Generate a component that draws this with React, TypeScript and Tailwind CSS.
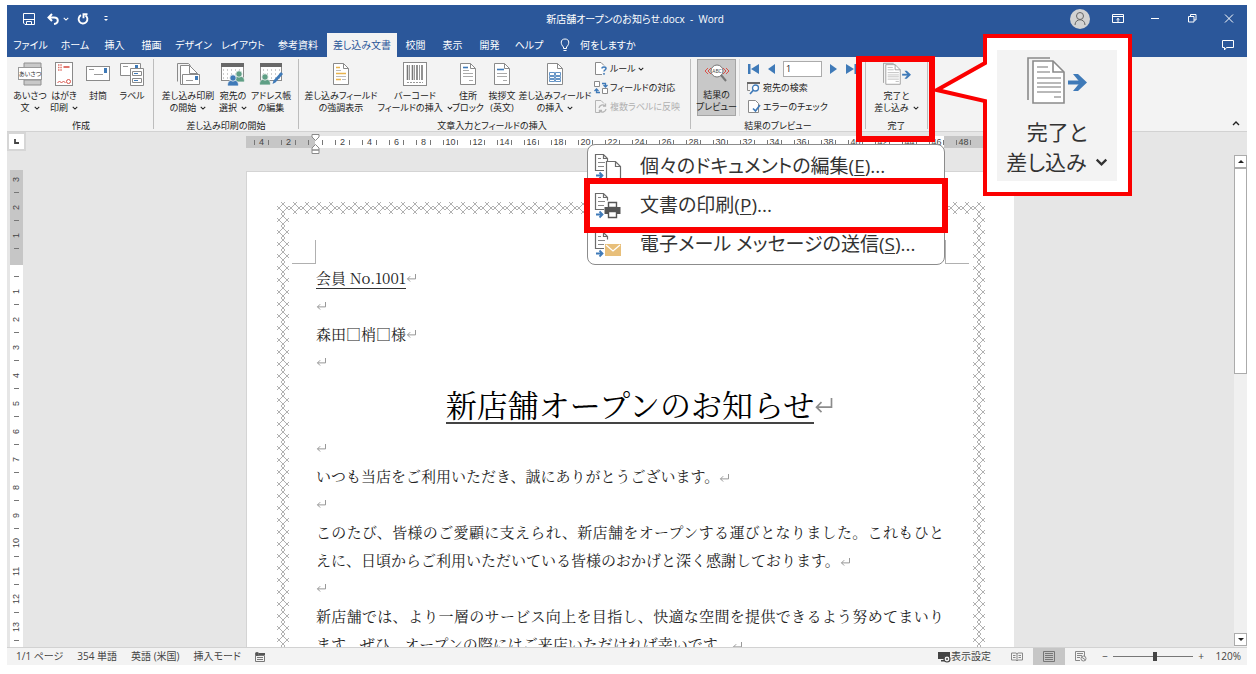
import { ReactNode } from "react";
import clsx from "clsx";

const BLUE = "#3f7ab8";

/* ---------- small shared drawings ---------- */

const Chevron = ({ className = "w-[6px] h-[4px]" }: { className?: string }) => (
  <svg viewBox="0 0 8 5" className={clsx("inline-block shrink-0", className)} fill="none" stroke="currentColor" strokeWidth="1.4">
    <path d="M1 1l3 3 3-3" />
  </svg>
);

const ReturnMark = ({ className = "w-[11px] h-[8px]" }: { className?: string }) => (
  <svg viewBox="0 0 12 9" className={clsx("shrink-0 text-[#8c8c8c]", className)} fill="none" stroke="currentColor">
    <path d="M10.500 0v5.500H1.500M4.500 2.500l-3 3 3 3" />
  </svg>
);

const Sheet = ({ children }: { children?: ReactNode }) => (
  <svg viewBox="0 0 24 24" className="h-6 w-6" fill="none">
    <path d="M4.500 1.500h10l5 5v16h-15z" fill="#fff" stroke="#8a8a8a" />
    <path d="M14.500 1.500v5h5" stroke="#8a8a8a" />
    {children}
  </svg>
);

const GreetingIcon = () => (
  <svg viewBox="0 0 24 24" className="h-6 w-6">
    <path d="M6 1h17v5H6zM6 18h17v5H6z" fill="#c9c9c9" stroke="#909090" />
    <rect x="0.500" y="5.500" width="23" height="12" fill="#fff" stroke="#9a9a9a" />
    <text x="12" y="14" textAnchor="middle" fontSize="6" fill="#333">
      あいさつ
    </text>
  </svg>
);

const PostcardIcon = () => (
  <svg viewBox="0 0 24 24" className="h-6 w-6" fill="none">
    <rect x="3.500" y="0.500" width="17" height="23" fill="#fff" stroke="#8a8a8a" />
    <path d="M6 3h4M6 5.500h4M6 8h4" stroke="#e0766c" strokeWidth="1.500" strokeDasharray="1.500 0.800" />
    <path d="M11.500 5h6" stroke="#d9534a" strokeWidth="1.600" />
    <path d="M5.500 20.500l2-1 2 1 2-1 2 1" stroke="#d9534a" />
    <circle cx="16.500" cy="19.500" r="2" stroke="#d9534a" />
  </svg>
);

const EnvelopeIcon = () => (
  <svg viewBox="0 0 24 24" className="h-6 w-6" fill="none">
    <rect x="0.500" y="4.500" width="23" height="14" fill="#fff" stroke="#8a8a8a" />
    <path d="M3 7.500h5M8 12.500h9" stroke="#999" />
    <path d="M18 6h3v5h-3z" fill={BLUE} />
  </svg>
);

const LabelIcon = () => (
  <svg viewBox="0 0 24 24" className="h-6 w-6" fill="none">
    <path d="M0.500 1.500h20v12h-20z" fill="#fff" stroke="#8a8a8a" />
    <path d="M3 4.500h5" stroke="#999" />
    <path d="M15 3h3v3h-3z" fill={BLUE} />
    <path d="M10.500 6.500h13v17h-13z" fill="#fff" stroke="#8a8a8a" />
    <path d="M12.500 9.500h9v4h-9zM12.500 16.500h9v4h-9z" stroke="#8a8a8a" />
    <path d="M14 11.500h4M14 18.500h4" stroke={BLUE} />
  </svg>
);

const StartMergeIcon = () => (
  <svg viewBox="0 0 24 24" className="h-6 w-6" fill="none">
    <path d="M1.500 19.500v-18h11l2 2" stroke="#8a8a8a" />
    <path d="M4.500 3.500h9l8 8v11h-17z" fill="#fff" stroke="#8a8a8a" />
    <path d="M13.500 3.500v8h8" stroke="#8a8a8a" />
    <path d="M6.500 12.500h17v10h-17z" fill="#fff" stroke="#8a8a8a" />
    <path d="M10 18.500h7" stroke="#999" />
    <path d="M19 14h3v4h-3z" fill={BLUE} />
  </svg>
);

const Person = ({ x, y, fill }: { x: number; y: number; fill: string }) => (
  <g transform={`translate(${x} ${y})`} fill={fill} stroke="#f3f3f3" strokeWidth="0.8">
    <path d="M-5.500 11c0-4 1.500-5.500 3.500-5.500h4c2 0 3.500 1.500 3.500 5.500z" />
    <circle cx="0" cy="3" r="3.200" />
  </g>
);

const RecipientsIcon = () => (
  <svg viewBox="0 0 24 24" className="h-6 w-6" fill="none">
    <rect x="0.500" y="1.500" width="22" height="17" fill="#fff" stroke="#8a8a8a" />
    <path d="M0 1h23v4H0z" fill="#686868" />
    <path d="M2 8h19M2 12h19M2 16h19" stroke="#999" strokeDasharray="1 3" />
    <Person x={18} y={9} fill="#5f9f85" />
    <Person x={12} y={13} fill={BLUE} />
  </svg>
);

const EditListIcon = () => (
  <svg viewBox="0 0 24 24" className="h-6 w-6" fill="none">
    <rect x="1.500" y="1.500" width="21" height="17" fill="#fff" stroke="#8a8a8a" />
    <path d="M1 1h22v4H1z" fill="#686868" />
    <path d="M4 8h17M4 12h17M4 16h17" stroke="#999" strokeDasharray="1 3" />
    <Person x={6} y={12} fill="#5f9f85" />
    <path d="M13.500 22l1-3.500 7.500-8.500 2 2-7.500 8.500z" fill={BLUE} />
  </svg>
);

const HighlightIcon = () => (
  <Sheet>
    <path d="M7 5.500h4M7 11.500h10M7 17.500h5" stroke="#e9b44c" strokeWidth="1.600" />
    <path d="M7 8.500h5M7 14.500h10M13 17.500h4" stroke="#bbb" />
  </Sheet>
);

const BarcodeIcon = () => (
  <svg viewBox="0 0 24 24" className="h-6 w-6" fill="none">
    <rect x="0.500" y="0.500" width="23" height="23" fill="#fff" stroke="#8a8a8a" />
    <path d="M4.500 3v15M9.500 3v15M14 3v15M19 3v15" stroke="#777" strokeWidth="1.600" />
    <path d="M6.500 3v15M11.500 3v15M16.500 3v15" stroke="#999" strokeWidth="1" />
    <path d="M4 20.500h16" stroke="#999" strokeDasharray="2 1" />
  </svg>
);

const AddressBlockIcon = () => (
  <Sheet>
    <path d="M7 5.500h5" stroke={BLUE} strokeWidth="1.600" />
    <path d="M7 8.500h6M7 11.500h10M7 14.500h10M13 18.500h4" stroke="#aaa" />
  </Sheet>
);

const GreetingLineIcon = () => (
  <Sheet>
    <path d="M7 7.500h7" stroke={BLUE} strokeWidth="1.600" />
    <path d="M7 11.500h10M7 14.500h10M13 18.500h4" stroke="#aaa" />
  </Sheet>
);

const InsertFieldIcon = () => (
  <Sheet>
    <path d="M6.500 10.500h5v3h-5zM12.500 10.500h5v3h-5zM6.500 14.500h5v2h-5zM12.500 14.500h5v2h-5zM6.500 17.500h5v2h-5zM12.500 17.500h5v2h-5z" stroke={BLUE} strokeWidth="0.800" />
  </Sheet>
);

const FinishIcon = ({ className }: { className: string }) => (
  <svg viewBox="0 0 60 48" className={className} fill="none">
    <path d="M1 43V1h22" stroke="#8a8a8a" strokeWidth="1.600" />
    <path d="M6 4h20l11 11v31H6z" fill="#fff" stroke="#8a8a8a" strokeWidth="1.600" />
    <path d="M26 4v11h11" stroke="#8a8a8a" strokeWidth="1.600" />
    <path d="M10 10h11M10 15h13M10 21h24M10 26h24M10 30h24M10 35h24M27 40h7" stroke="#a3a3a3" strokeWidth="1.400" />
    <path d="M41 25.500h14" stroke={BLUE} strokeWidth="4" />
    <path d="M46 17h5l9 8.500-9 8.500h-5l7-8.500z" fill={BLUE} />
  </svg>
);

const PreviewIcon = () => (
  <svg viewBox="0 0 26 20" className="h-6 w-[26px]" fill="none">
    <path d="M4 5L1 8l3 3M7 5L4 8l3 3M22 5l3 3-3 3M19 5l3 3-3 3" stroke="#d9534a" />
    <circle cx="13" cy="8" r="6" fill="#fff" stroke="#777" />
    <path d="M17 12l5 6" stroke="#777" strokeWidth="2" />
    <text x="13" y="10" textAnchor="middle" fontSize="5" fill="#444">
      ABC
    </text>
  </svg>
);

const smallIcon = "h-[14px] w-[14px] shrink-0";

const RuleIcon = () => (
  <svg viewBox="0 0 14 14" className={smallIcon} fill="none">
    <path d="M8 12.500H1.500v-12H7l3 3" fill="#fff" stroke="#8a8a8a" />
    <path d="M8 6.500c0-2 4-2 4 0 0 1.500-2 1.500-2 3M10 11v1.800" stroke={BLUE} strokeWidth="1.500" />
  </svg>
);

const MatchIcon = () => (
  <svg viewBox="0 0 14 14" className={smallIcon} fill="none">
    <path d="M0.500 0.500h5v5h-5zM8.500 7.500h5v5h-5z" fill="#fff" stroke="#8a8a8a" />
    <path d="M8 2.500h3.500v3M9.500 4l2 2 2-2M6 11.500H2.500v-3M0.500 10l2-2 2 2" stroke={BLUE} strokeWidth="1.300" />
  </svg>
);

const UpdateLabelsIcon = () => (
  <svg viewBox="0 0 14 14" className={smallIcon} fill="none" stroke="#b5b5b5">
    <path d="M5 12.500H1.500v-12H7l3 3" />
    <path d="M5 8a3.500 3.500 0 016-2M12 9a3.500 3.500 0 01-6 2M11.500 3.500V6H9M5.500 13v-2.500H8" strokeWidth="1.300" />
  </svg>
);

const FindIcon = () => (
  <svg viewBox="0 0 14 14" className={smallIcon} fill="none">
    <path d="M3 9.500H.5v-7h12" stroke="#8a8a8a" />
    <path d="M0 1h13v2H0z" fill="#686868" />
    <circle cx="8.500" cy="7" r="3" fill="#fff" stroke={BLUE} strokeWidth="1.300" />
    <path d="M6.500 9L3 13" stroke={BLUE} strokeWidth="1.600" />
  </svg>
);

const CheckIcon = () => (
  <svg viewBox="0 0 14 14" className={smallIcon} fill="none">
    <path d="M1.500 .5h7l3 3v9h-10z" fill="#fff" stroke="#8a8a8a" />
    <path d="M6 8.500l2.500 2.500L13 5" stroke={BLUE} strokeWidth="1.700" />
  </svg>
);

/* ---------- title bar ---------- */

const TitleBar = () => (
  <header className="flex h-7 shrink-0 items-center justify-between bg-[#2b579a] text-white">
    <div className="flex flex-1 items-center pl-4">
      <button aria-label="上書き保存">
        <svg viewBox="0 0 12 12" className="h-3 w-3" fill="none" stroke="currentColor">
          <path d="M.5.5h11v11H2l-1.500-1.500zM.5 6.500h11M3.500 11.500v-3h5v3" />
        </svg>
      </button>
      <button aria-label="元に戻す" className="ml-3 flex items-center gap-1">
        <svg viewBox="0 0 12 12" className="h-3 w-3" fill="none" stroke="currentColor" strokeWidth="2">
          <path d="M5 1L1.500 4.500 5 8M2 4.500h5c5 0 5 6 0 6.500" />
        </svg>
        <Chevron />
      </button>
      <button aria-label="やり直し" className="ml-2">
        <svg viewBox="0 0 12 12" className="h-3 w-3" fill="none" stroke="currentColor" strokeWidth="1.900">
          <path d="M4 2.200A4.400 4.400 0 108.500 2.500M10.500 1.200H6.500v4" />
        </svg>
      </button>
      <button aria-label="クイック アクセス ツール バーのカスタマイズ" className="ml-[14px]">
        <svg viewBox="0 0 6 6" className="h-[6px] w-[6px]" fill="currentColor">
          <path d="M1.500 0h3v1h-3zM1 3h4L3 5z" />
        </svg>
      </button>
    </div>
    <h1 className="whitespace-pre text-[10px]">新店舗オープンのお知らせ.docx  -  Word</h1>
    <div className="flex flex-1 items-center justify-end">
      <button aria-label="アカウント" className="mr-[9px]">
        <svg viewBox="0 0 20 20" className="h-5 w-5" fill="none">
          <circle cx="10" cy="10" r="10" fill="#d2d2d2" />
          <circle cx="10" cy="7" r="3.500" stroke="#666" />
          <path d="M5 16c0-7 10-7 10 0" stroke="#666" />
        </svg>
      </button>
      {[
        { name: "リボンの表示オプション", d: "M.5 1.500h11v8H.5zM.5 3.500h11M6 9V5.500M4.500 6.800L6 5.400l1.500 1.400" },
        { name: "最小化", d: "M2 5.500h8" },
        { name: "元に戻す (縮小)", d: "M2.500 3.500h5.500v5.500H2.500zM4.500 3.500V1.500h5.500v5.500H8" },
        { name: "閉じる", d: "M2 1.500l8 8M10 1.500l-8 8" },
      ].map((item) => (
        <button key={item.name} aria-label={item.name} className="flex w-[37px] justify-center">
          <svg viewBox="0 0 12 12" className="h-3 w-3" fill="none" stroke="currentColor">
            <path d={item.d} />
          </svg>
        </button>
      ))}
    </div>
  </header>
);

const tabs = [
  { label: "ファイル", width: "w-[47px]" },
  { label: "ホーム", width: "w-[42px]" },
  { label: "挿入", width: "w-[37px]" },
  { label: "描画", width: "w-[37px]" },
  { label: "デザイン", width: "w-[47px]" },
  { label: "レイアウト", width: "w-[52px]" },
  { label: "参考資料", width: "w-[58px]" },
  { label: "差し込み文書", width: "w-[70px]", active: true },
  { label: "校閲", width: "w-[37px]" },
  { label: "表示", width: "w-[37px]" },
  { label: "開発", width: "w-[37px]" },
  { label: "ヘルプ", width: "w-[42px]" },
];

const TabBar = () => (
  <nav className="flex h-6 shrink-0 items-stretch whitespace-nowrap bg-[#2b579a] text-[10px] text-white">
    {tabs.map((tab) => (
      <button key={tab.label} className={clsx("shrink-0", tab.width, tab.active && "bg-[#f3f3f3] text-[#2b579a]")}>
        {tab.label}
      </button>
    ))}
    <button className="ml-[10px] flex items-center gap-[10px]">
      <svg viewBox="0 0 10 14" className="h-[14px] w-[10px]" fill="none" stroke="currentColor">
        <path d="M3.500 10.500V9C.5 6.500 0 1 5 1s4.500 5.500 1.500 8v1.500zM3.500 12.500h3" />
      </svg>
      何をしますか
    </button>
    <button aria-label="コメント" className="ml-auto mr-3">
      <svg viewBox="0 0 14 12" className="h-3 w-[14px]" fill="none" stroke="currentColor">
        <path d="M1.500 1.500h11v7H5.500L3.500 11V8.500h-2z" />
      </svg>
    </button>
  </nav>
);

/* ---------- ribbon ---------- */

interface BigButtonProps {
  icon: ReactNode;
  lines: string[];
  width: string;
  menu?: boolean;
  pressed?: boolean;
}

const BigButton = ({ icon, lines, width, menu, pressed }: BigButtonProps) => (
  <button
    className={clsx(
      "flex h-[57px] shrink-0 flex-col items-center gap-1 whitespace-nowrap leading-[12px]",
      width,
      pressed ? "border border-[#a5a5a5] bg-[#c8c8c8] pt-px" : "pt-[3px]"
    )}
  >
    {icon}
    <span className="flex flex-col items-center">
      {lines.map((line, i) => (
        <span key={line} className="flex items-center gap-1">
          {line}
          {menu && i === lines.length - 1 && <Chevron />}
        </span>
      ))}
    </span>
  </button>
);

const Group = ({ label, className, children }: { label: string; className?: string; children: ReactNode }) => (
  <section className="flex shrink-0 items-start">
    <div className={clsx("flex h-[73px] flex-col justify-between", className)}>
      <div className="flex">{children}</div>
      <div className="text-center leading-[12px]">{label}</div>
    </div>
    <div className="h-[70px] w-px bg-[#bdbdbd]" />
  </section>
);

const SmallButton = ({ icon, label, menu, disabled }: { icon: ReactNode; label: string; menu?: boolean; disabled?: boolean }) => (
  <button disabled={disabled} className={clsx("flex h-[19px] items-center gap-[2px] whitespace-nowrap", disabled && "text-[#b0b0b0]")}>
    {icon}
    {label}
    {menu && <Chevron />}
  </button>
);

const navButtons = {
  first: { name: "先頭のレコード", d: "M1 1h2.500v10H1zM12 1v10L4 6z" },
  prev: { name: "前のレコード", d: "M10 1v10L3 6z" },
  next: { name: "次のレコード", d: "M2 1v10l7-5z" },
  last: { name: "最後のレコード", d: "M8.500 1H11v10H8.500zM0 1v10l8-5z" },
};

const NavButton = ({ kind }: { kind: keyof typeof navButtons }) => (
  <button aria-label={navButtons[kind].name}>
    <svg viewBox="0 0 12 12" className="h-3 w-3" fill={BLUE}>
      <path d={navButtons[kind].d} />
    </svg>
  </button>
);

const Ribbon = () => (
  <div className="flex h-[75px] shrink-0 border-b border-[#d2d2d2] bg-[#f3f3f3] pt-[2px] text-[9px] text-[#222]">
    <Group label="作成" className="pl-[6px] pr-1">
      <BigButton icon={<GreetingIcon />} lines={["あいさつ", "文"]} width="w-[34px]" menu />
      <BigButton icon={<PostcardIcon />} lines={["はがき", "印刷"]} width="w-[34px]" menu />
      <BigButton icon={<EnvelopeIcon />} lines={["封筒"]} width="w-[34px]" />
      <BigButton icon={<LabelIcon />} lines={["ラベル"]} width="w-[34px]" />
    </Group>
    <Group label="差し込み印刷の開始" className="pl-[6px] pr-[6px]">
      <BigButton icon={<StartMergeIcon />} lines={["差し込み印刷", "の開始"]} width="w-[56px]" menu />
      <BigButton icon={<RecipientsIcon />} lines={["宛先の", "選択"]} width="w-[34px]" menu />
      <BigButton icon={<EditListIcon />} lines={["アドレス帳", "の編集"]} width="w-[42px]" />
    </Group>
    <Group label="文章入力とフィールドの挿入" className="pl-1 pr-[9px]">
      <BigButton icon={<HighlightIcon />} lines={["差し込みフィールド", "の強調表示"]} width="w-[76px]" />
      <BigButton icon={<BarcodeIcon />} lines={["バーコード", "フィールドの挿入"]} width="w-[72px]" menu />
      <BigButton icon={<AddressBlockIcon />} lines={["住所", "ブロック"]} width="w-[34px]" />
      <BigButton icon={<GreetingLineIcon />} lines={["挨拶文", "(英文)"]} width="w-[34px]" />
      <BigButton icon={<InsertFieldIcon />} lines={["差し込みフィールド", "の挿入"]} width="w-[72px]" menu />
      <div className="flex w-[90px] flex-col pl-[3px]">
        <SmallButton icon={<RuleIcon />} label="ルール" menu />
        <SmallButton icon={<MatchIcon />} label="フィールドの対応" />
        <SmallButton icon={<UpdateLabelsIcon />} label="複数ラベルに反映" disabled />
      </div>
    </Group>
    <Group label="結果のプレビュー" className="pl-[6px] pr-[6px]">
      <BigButton icon={<PreviewIcon />} lines={["結果の", "プレビュー"]} width="w-[39px]" pressed />
      <div className="ml-[3px] flex w-[120px] flex-col border-l border-[#dcdcdc] pl-[7px]">
        <div className="flex h-[19px] items-center gap-[6px]">
          <NavButton kind="first" />
          <NavButton kind="prev" />
          <input aria-label="レコード" defaultValue="1" className="h-4 w-[39px] border border-[#ababab] bg-white px-[2px]" />
          <NavButton kind="next" />
          <NavButton kind="last" />
        </div>
        <SmallButton icon={<FindIcon />} label="宛先の検索" />
        <SmallButton icon={<CheckIcon />} label="エラーのチェック" />
      </div>
    </Group>
    <Group label="完了">
      <BigButton icon={<FinishIcon className="h-6 w-[28px]" />} lines={["完了と", "差し込み"]} width="w-[61px]" menu />
    </Group>
    <button aria-label="リボンを折りたたむ" className="mb-[2px] ml-auto mr-[7px] self-end">
      <Chevron className="h-[5px] w-2 rotate-180" />
    </button>
  </div>
);

/* ---------- rulers ---------- */

const rulerMarks = Array.from({ length: 27 }, (_, i) => i * 2 - 4);

const Tick = () => <span className="h-[5px] w-px bg-[#777]" />;

const HorizontalRuler = () => (
  <div className="relative flex h-3 w-[768px] bg-[linear-gradient(to_right,#c6c6c6_69px,#fff_69px,#fff_698px,#c6c6c6_698px)] pl-[2px] font-['Liberation_Sans',sans-serif] text-[9px] leading-[12px] text-[#444]">
    {rulerMarks.map((mark) => (
      <div key={mark} className="flex w-[27px] shrink-0 items-center justify-center">
        <Tick />
        <span className="flex w-[13px] justify-center">{mark === 0 ? "" : Math.abs(mark)}</span>
        <Tick />
      </div>
    ))}
    <svg viewBox="0 0 9 20" className="absolute -top-[2px] left-[65px] h-5 w-[9px]" fill="#fff" stroke="#8a8a8a">
      <path d="M1 .5h7v2.500L4.500 6.500 1 3zM4.500 10.500L8 14v2H1v-2zM1 16h7v3.500H1z" />
    </svg>
  </div>
);

const verticalMarks = [3, 2, 1, 0, 1, 2, 3, 4, 5, 6, 7, 8, 9, 10, 11, 12, 13];

const VerticalRuler = () => (
  <div className="ml-[3px] mt-[38px] w-[13px] shrink-0 overflow-hidden bg-[linear-gradient(to_bottom,#c6c6c6_95px,#fff_95px)] pt-[2px] font-['Liberation_Sans',sans-serif] text-[9px] leading-[13px] text-[#444]">
    {verticalMarks.map((mark, i) => (
      <div key={i} className="flex h-[28px] flex-col items-center">
        <span className="flex h-[14px] rotate-180 items-center justify-center [writing-mode:vertical-rl]">{mark || ""}</span>
        <span className="my-[6px] h-px w-[5px] bg-[#777]" />
      </div>
    ))}
  </div>
);

/* ---------- document ---------- */

// one stitch of the page border: a diamond whose sides run past the corners
const BorderStrip = ({ id, className }: { id: string; className: string }) => (
  <svg className={clsx("shrink-0", className)}>
    <defs>
      <pattern id={id} width="12" height="12" patternUnits="userSpaceOnUse">
        <path d="M0 8L8 0M4 0l8 8M12 4l-8 8M8 12L0 4" fill="none" stroke="#8f8f8f" strokeWidth="0.700" />
      </pattern>
    </defs>
    <rect width="100%" height="100%" fill={`url(#${id})`} />
  </svg>
);

const Line = ({ children }: { children?: ReactNode }) => (
  <p className="flex h-[28px] items-center">
    {children}
    <ReturnMark />
  </p>
);

const Paragraph = ({ children }: { children: ReactNode }) => (
  <p className="text-justify leading-[28px]">
    {children}
    <ReturnMark className="inline-block h-[8px] w-[11px]" />
  </p>
);

const Page = () => (
  <article className="mt-[23px] min-h-0 w-[768px] flex-1 overflow-hidden border-l border-t border-[#d4d4d4] bg-white pl-[30px] pt-[30px] [font-feature-settings:normal]">
    <div className="w-[708px]">
      <BorderStrip id="stitch-top" className="block h-3 w-full" />
      <div className="flex">
        <BorderStrip id="stitch-left" className="h-[480px] w-3" />
        <div className="flex-1">
          <div className="flex justify-between pl-[3px] pr-1 pt-[26px]">
            <div className="h-6 w-6 border-b border-r border-[#b0b0b0]" />
            <div className="h-6 w-6 border-b border-l border-[#b0b0b0]" />
          </div>
          <div className="ml-[27px] w-[628px] font-['Noto_Serif_CJK_JP','Noto_Sans_CJK_JP',serif] text-[15px] text-[#222]">
            <Line>
              <span className="border-b border-[#333] leading-[20px]">会員 No.1001</span>
            </Line>
            <Line />
            <Line>森田□梢□様</Line>
            <Line />
            <h2 className="flex h-[58px] items-center justify-center text-[31px] text-black">
              <span className="border-b-2 border-[#444] leading-[36px]">新店舗オープンのお知らせ</span>
              <span className="w-0">
                <ReturnMark className="h-[15px] w-5" />
              </span>
            </h2>
            <Line />
            <Paragraph>いつも当店をご利用いただき、誠にありがとうございます。</Paragraph>
            <Line />
            <Paragraph>
              このたび、皆様のご愛顧に支えられ、新店舗をオープンする運びとなりました。これもひとえに、日頃からご利用いただいている皆様のおかげと深く感謝しております。
            </Paragraph>
            <Line />
            <Paragraph>
              新店舗では、より一層のサービス向上を目指し、快適な空間を提供できるよう努めてまいります。ぜひ、オープンの際にはご来店いただければ幸いです。
            </Paragraph>
          </div>
        </div>
        <BorderStrip id="stitch-right" className="h-[480px] w-3" />
      </div>
    </div>
  </article>
);

const Scrollbar = () => (
  <div className="mt-[23px] flex w-[13px] shrink-0 flex-col bg-[#f0f0f0]">
    <button aria-label="上へスクロール" className="flex h-[13px] items-center justify-center border border-[#ababab] bg-white">
      <svg viewBox="0 0 6 3" className="h-[3px] w-[6px]">
        <path d="M0 3l3-3 3 3z" fill="#222" />
      </svg>
    </button>
    <div className="h-[206px] border border-[#ababab] bg-white" />
    <button aria-label="下へスクロール" className="mb-[1px] mt-auto flex h-[13px] items-center justify-center border border-[#ababab] bg-white">
      <svg viewBox="0 0 6 3" className="h-[3px] w-[6px]">
        <path d="M0 0l3 3 3-3z" fill="#222" />
      </svg>
    </button>
  </div>
);

const Workspace = () => (
  <main className="flex min-h-0 flex-1 bg-[#e6e6e6]">
    <div className="flex w-[19px] shrink-0 flex-col">
      <button aria-label="タブ セレクター" className="flex h-[19px] shrink-0 items-center justify-center border-2 border-[#d6d6d6] bg-white">
        <svg viewBox="0 0 5 5" className="h-[5px] w-[5px]" fill="none" stroke="#444" strokeWidth="1.800">
          <path d="M1 0v4h4" />
        </svg>
      </button>
      <div className="-mt-[19px] flex min-h-0 flex-1">
        <VerticalRuler />
      </div>
    </div>
    <div className="flex min-w-0 flex-1 flex-col items-center overflow-hidden pt-1">
      <HorizontalRuler />
      <Page />
    </div>
    <Scrollbar />
  </main>
);

/* ---------- status bar ---------- */

const StatusBar = () => (
  <footer className="flex h-[18px] shrink-0 items-center whitespace-nowrap border-t border-[#d2d2d2] bg-[#f3f3f3] pl-[9px] pr-[6px] text-[10px] text-[#444]">
    <div className="flex items-center gap-[14px]">
      <button>1/1 ページ</button>
      <button>354 単語</button>
      <button>英語 (米国)</button>
      <button>挿入モード</button>
      <button aria-label="マクロの記録">
        <svg viewBox="0 0 10 10" className="h-[10px] w-[10px]" fill="none" stroke="#777">
          <path d="M.5 3.500v6h9v-6zM2 5.500h6M2 7.500h6" />
          <path d="M4 1h6v2H4z" fill="#555" stroke="none" />
          <circle cx="2" cy="2" r="2" fill="#555" stroke="none" />
        </svg>
      </button>
    </div>
    <div className="ml-auto flex h-full items-center">
      <button className="mr-[10px] flex items-center">
        <svg viewBox="0 0 13 12" className="h-3 w-[13px]" fill="none">
          <path d="M0 1h12v7H0zM3 9h5v1.500H3z" fill="#444" />
          <circle cx="9" cy="8" r="3" fill="#f3f3f3" stroke="#444" strokeWidth="1.200" />
          <circle cx="9" cy="8" r="1" fill="#444" />
        </svg>
        表示設定
      </button>
      <button aria-label="閲覧モード" className="flex w-8 justify-center">
        <svg viewBox="0 0 12 10" className="h-[10px] w-3" fill="none" stroke="#888">
          <path d="M.5 1h4.500l1 .8 1-.8h4.500v7H7l-1 1-1-1H.5zM6 2v7M2 3.500h2.500M2 5.500h2.500M7.500 3.500H10M7.500 5.500H10" />
        </svg>
      </button>
      <button aria-label="印刷レイアウト" className="flex h-full w-8 items-center justify-center bg-[#c6c6c6]">
        <svg viewBox="0 0 12 11" className="h-[11px] w-3" fill="none" stroke="#777">
          <path d="M.5.5h11v10H.5zM2 2.500h8M2 4.500h8M2 6.500h8M2 8.500h8" />
        </svg>
      </button>
      <button aria-label="Web レイアウト" className="flex w-8 justify-center">
        <svg viewBox="0 0 12 11" className="h-[11px] w-3" fill="none" stroke="#888">
          <path d="M5 9.500H.5v-9h9V5M2 2.500h6M2 4.500h5M2 6.500h3" />
          <circle cx="8.500" cy="7.500" r="2.500" fill="#eee" />
          <path d="M6.500 6l4 3" />
        </svg>
      </button>
      <button aria-label="縮小" className="w-4">
        −
      </button>
      <input
        type="range"
        aria-label="ズーム"
        defaultValue={52}
        className="h-3 w-[80px] appearance-none bg-transparent [&::-webkit-slider-runnable-track]:h-px [&::-webkit-slider-runnable-track]:bg-[#777] [&::-webkit-slider-thumb]:-mt-1 [&::-webkit-slider-thumb]:h-[9px] [&::-webkit-slider-thumb]:w-1 [&::-webkit-slider-thumb]:appearance-none [&::-webkit-slider-thumb]:bg-[#444]"
      />
      <button aria-label="拡大" className="w-4">
        +
      </button>
      <button className="w-8 text-right">120%</button>
    </div>
  </footer>
);

/* ---------- finish & merge menu and the annotations ---------- */

const MenuDoc = ({ children }: { children: ReactNode }) => (
  <svg viewBox="0 0 28 28" className="h-7 w-7 shrink-0" fill="none">
    <path d="M10 17.500H1.500v-16h8l4 4v3M9.500 1.500v4h4" stroke="#6b6b6b" strokeWidth="1.200" />
    <path d="M4 5.500h3M4 9.500h7M4 13.500h6" stroke="#888" />
    <path d="M2 22.500h6M5.500 19.500l3 3-3 3" stroke={BLUE} strokeWidth="1.800" />
    {children}
  </svg>
);

const menuItems = [
  {
    label: "個々のドキュメントの編集",
    accessKey: "E",
    icon: (
      <MenuDoc>
        <path d="M12.500 8.500h9l5 5v12h-14zM21.500 8.500v5h5" fill="#fff" stroke="#6b6b6b" strokeWidth="1.200" />
      </MenuDoc>
    ),
  },
  {
    label: "文書の印刷",
    accessKey: "P",
    highlighted: true,
    icon: (
      <MenuDoc>
        <path d="M14.500 10.500h8v5h-8z" fill="#fff" stroke="#555" strokeWidth="1.400" />
        <path d="M10.500 15h16v7h-16z" fill="#555" />
        <path d="M14.500 19.500h8v6h-8z" fill="#fff" stroke="#555" strokeWidth="1.400" />
      </MenuDoc>
    ),
  },
  {
    label: "電子メール メッセージの送信",
    accessKey: "S",
    icon: (
      <MenuDoc>
        <path d="M11 13h16v12H11z" fill="#e8bf7a" />
        <path d="M12 14l7 6 7-6" stroke="#fff" strokeWidth="1.300" />
      </MenuDoc>
    ),
  },
];

const FinishMenu = () => (
  <div className="absolute left-[580px] top-[139px] w-[358px] rounded-lg border border-[#8c8c8c] bg-white pt-[2px]">
    {menuItems.map((item) => (
      <div key={item.accessKey} className="relative">
        <button className="flex h-[39px] w-full items-center gap-[18px] whitespace-nowrap pl-[6px] text-[19px] text-[#333]">
          {item.icon}
          <span>
            {item.label}(<u className="underline-offset-2">{item.accessKey}</u>)...
          </span>
        </button>
        {item.highlighted && <div className="pointer-events-none absolute -inset-x-1 -inset-y-2 z-10 border-[6px] border-[#fb0000]" />}
      </div>
    ))}
  </div>
);

const Callout = () => (
  <aside className="absolute left-[925px] top-[29px] h-[162px] w-[200px] pl-[65px] pt-4">
    <svg viewBox="0 0 200 162" className="absolute inset-0 h-full w-full" fill="#fff" stroke="#fb0000" strokeWidth="4">
      <path d="M53 2h145v158H53V67L5 56l48-27z" />
    </svg>
    <div className="relative flex h-[131px] w-[120px] flex-col items-center bg-[#f3f3f3] pt-[7px] text-[21px] leading-[30px] text-[#333]">
      <FinishIcon className="h-12 w-[60px]" />
      <span className="mt-3">完了と</span>
      <span className="flex items-center gap-2 whitespace-nowrap">
        差し込み
        <Chevron className="h-2 w-[13px]" />
      </span>
    </div>
  </aside>
);

const App = () => (
  <div
    lang="ja"
    className="h-screen overflow-hidden bg-white pb-[9px] pl-[7px] pr-[9px] pt-[5px] font-['Open_Sans','Noto_Sans_CJK_JP',sans-serif] [font-feature-settings:'palt']"
  >
    <div className="relative flex h-full flex-col">
      <TitleBar />
      <TabBar />
      <Ribbon />
      <Workspace />
      <StatusBar />
      <FinishMenu />
      <div className="pointer-events-none absolute left-[849px] top-[51px] h-[86px] w-[79px] border-[6px] border-[#fb0000]" />
      <Callout />
    </div>
  </div>
);

export default App;
